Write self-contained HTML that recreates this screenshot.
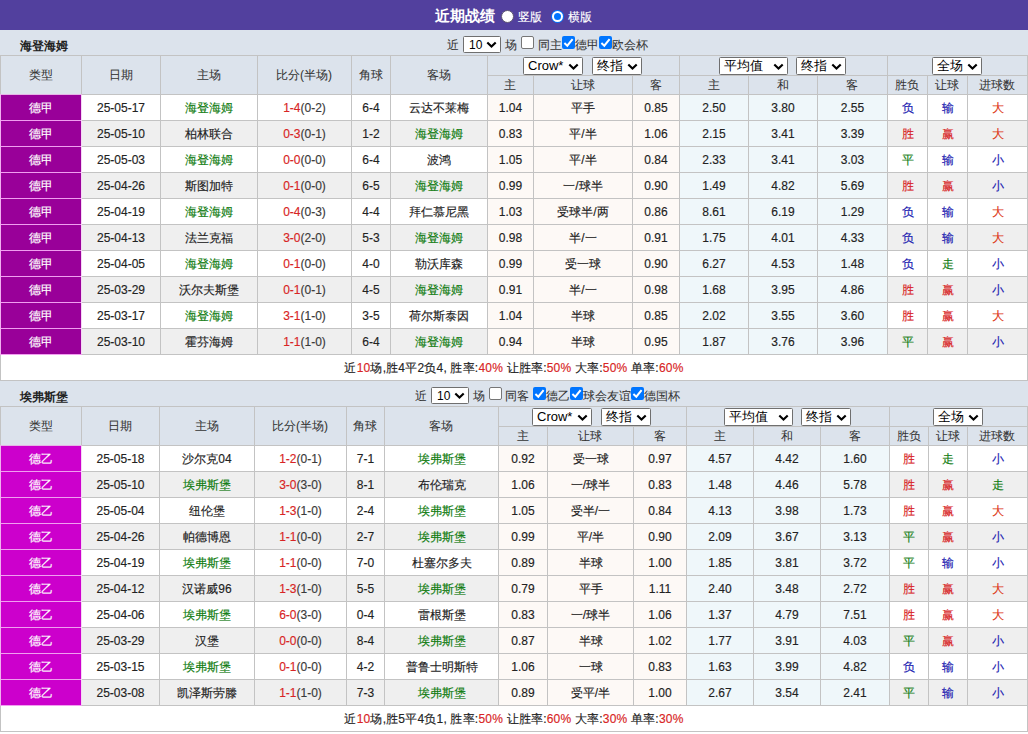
<!DOCTYPE html>
<html><head><meta charset="utf-8"><style>
html,body{margin:0;padding:0;background:#fff;}
body{width:1028px;height:734px;position:relative;overflow:hidden;font-family:"Liberation Sans", sans-serif;font-size:12px;color:#222;}
body>div{position:absolute;}
.t{text-align:center;white-space:nowrap;overflow:visible;-webkit-text-stroke:0.15px currentColor;}
.sel{position:absolute;background:#fff;border:1px solid #6f6f6f;border-radius:1.5px;color:#000;white-space:nowrap;}
.cb{position:absolute;width:11px;height:11px;border:1px solid #767676;border-radius:2px;background:#fff;}
.cb.on{width:13px;height:13px;border:none;background:#0075ff;border-radius:2px;}
.radio{position:absolute;width:11px;height:11px;border-radius:50%;background:#fff;border:1px solid #5c5470;}
.radio.on{width:13px;height:13px;border:none;background:#0075ff;}
.radio.on div{position:absolute;left:1px;top:1px;width:11px;height:11px;border-radius:50%;background:#fff;}
.radio.on div::after{content:"";position:absolute;left:2px;top:2px;width:7px;height:7px;border-radius:50%;background:#0075ff;}
</style></head><body>
<div style="left:0px;top:0px;width:1028px;height:30px;background:#52409e;"></div>
<div class="t" style="left:435px;top:1px;width:64px;height:30px;line-height:30px;color:#fff;font-weight:bold;font-size:15px;text-align:left;-webkit-text-stroke:0;">近期战绩</div>
<div class="radio" style="left:501px;top:10px"></div>
<div class="t" style="left:518px;top:2px;width:30px;height:30px;line-height:30px;color:#fff;text-align:left;font-size:12px;">竖版</div>
<div class="radio on" style="left:551px;top:10px"><div></div></div>
<div class="t" style="left:568px;top:2px;width:30px;height:30px;line-height:30px;color:#fff;text-align:left;font-size:12px;">横版</div>
<div style="left:0px;top:30px;width:1028px;height:25px;background:#dce3ec;"></div>
<div class="t" style="left:20px;top:34px;width:100px;height:25px;line-height:25px;font-weight:bold;text-align:left;color:#222;-webkit-text-stroke:0;">海登海姆</div>
<div class="t" style="left:447px;top:33px;width:100px;height:25px;line-height:25px;text-align:left;color:#333;-webkit-text-stroke:0.05px #333;">近</div>
<div class="sel" style="left:463px;top:36px;width:36px;height:15px;"><span style="position:absolute;left:5px;top:1px;line-height:15px;font-size:12px;font-family:"Liberation Mono",monospace;letter-spacing:-0.5px;">10</span><svg style="position:absolute;right:3px;top:4px" width="11" height="8" viewBox="0 0 11 8"><path d="M1.3 1.4 L5.5 5.6 L9.7 1.4" fill="none" stroke="#000" stroke-width="2.1"/></svg></div>
<div class="t" style="left:505px;top:33px;width:100px;height:25px;line-height:25px;text-align:left;color:#333;-webkit-text-stroke:0.05px #333;">场</div>
<div class="cb" style="left:521px;top:36px"></div>
<div class="t" style="left:538px;top:33px;width:100px;height:25px;line-height:25px;text-align:left;color:#333;-webkit-text-stroke:0.05px #333;">同主</div>
<div class="cb on" style="left:562px;top:36px"><svg width="13" height="13" viewBox="0 0 13 13" style="position:absolute;left:0;top:0"><path d="M2.4 7.1 L5.3 9.7 L10.6 3.2" fill="none" stroke="#fff" stroke-width="2"/></svg></div>
<div class="t" style="left:575px;top:33px;width:100px;height:25px;line-height:25px;text-align:left;color:#333;-webkit-text-stroke:0.05px #333;">德甲</div>
<div class="cb on" style="left:599px;top:36px"><svg width="13" height="13" viewBox="0 0 13 13" style="position:absolute;left:0;top:0"><path d="M2.4 7.1 L5.3 9.7 L10.6 3.2" fill="none" stroke="#fff" stroke-width="2"/></svg></div>
<div class="t" style="left:612px;top:33px;width:100px;height:25px;line-height:25px;text-align:left;color:#333;-webkit-text-stroke:0.05px #333;">欧会杯</div>
<div style="left:0px;top:55px;width:1028px;height:39px;background:#dce3ec;"></div>
<div class="t" style="left:0px;top:56px;width:81px;height:38px;line-height:38px;color:#333;-webkit-text-stroke:0.05px #333;">类型</div>
<div class="t" style="left:81px;top:56px;width:79px;height:38px;line-height:38px;color:#333;-webkit-text-stroke:0.05px #333;">日期</div>
<div class="t" style="left:160px;top:56px;width:97px;height:38px;line-height:38px;color:#333;-webkit-text-stroke:0.05px #333;">主场</div>
<div class="t" style="left:257px;top:56px;width:94px;height:38px;line-height:38px;color:#333;-webkit-text-stroke:0.05px #333;">比分(半场)</div>
<div class="t" style="left:351px;top:56px;width:39px;height:38px;line-height:38px;color:#333;-webkit-text-stroke:0.05px #333;">角球</div>
<div class="t" style="left:390px;top:56px;width:97px;height:38px;line-height:38px;color:#333;-webkit-text-stroke:0.05px #333;">客场</div>
<div class="t" style="left:487px;top:76px;width:46px;height:18px;line-height:18px;color:#333;-webkit-text-stroke:0.05px #333;">主</div>
<div class="t" style="left:533px;top:76px;width:99px;height:18px;line-height:18px;color:#333;-webkit-text-stroke:0.05px #333;">让球</div>
<div class="t" style="left:632px;top:76px;width:47px;height:18px;line-height:18px;color:#333;-webkit-text-stroke:0.05px #333;">客</div>
<div class="t" style="left:679px;top:76px;width:69px;height:18px;line-height:18px;color:#333;-webkit-text-stroke:0.05px #333;">主</div>
<div class="t" style="left:748px;top:76px;width:69px;height:18px;line-height:18px;color:#333;-webkit-text-stroke:0.05px #333;">和</div>
<div class="t" style="left:817px;top:76px;width:70px;height:18px;line-height:18px;color:#333;-webkit-text-stroke:0.05px #333;">客</div>
<div class="t" style="left:887px;top:76px;width:40px;height:18px;line-height:18px;color:#333;-webkit-text-stroke:0.05px #333;">胜负</div>
<div class="t" style="left:927px;top:76px;width:40px;height:18px;line-height:18px;color:#333;-webkit-text-stroke:0.05px #333;">让球</div>
<div class="t" style="left:967px;top:76px;width:60px;height:18px;line-height:18px;color:#333;-webkit-text-stroke:0.05px #333;">进球数</div>
<div class="sel" style="left:523px;top:57px;width:58px;height:16px;"><span style="position:absolute;left:4px;top:0px;line-height:16px;font-size:13px;">Crow*</span><svg style="position:absolute;right:3px;top:5px" width="11" height="8" viewBox="0 0 11 8"><path d="M1.3 1.4 L5.5 5.6 L9.7 1.4" fill="none" stroke="#000" stroke-width="2.1"/></svg></div>
<div class="sel" style="left:592px;top:57px;width:48px;height:16px;"><span style="position:absolute;left:4px;top:0px;line-height:16px;font-size:13px;">终指</span><svg style="position:absolute;right:3px;top:5px" width="11" height="8" viewBox="0 0 11 8"><path d="M1.3 1.4 L5.5 5.6 L9.7 1.4" fill="none" stroke="#000" stroke-width="2.1"/></svg></div>
<div class="sel" style="left:719px;top:57px;width:67px;height:16px;"><span style="position:absolute;left:4px;top:0px;line-height:16px;font-size:13px;">平均值</span><svg style="position:absolute;right:3px;top:5px" width="11" height="8" viewBox="0 0 11 8"><path d="M1.3 1.4 L5.5 5.6 L9.7 1.4" fill="none" stroke="#000" stroke-width="2.1"/></svg></div>
<div class="sel" style="left:796px;top:57px;width:48px;height:16px;"><span style="position:absolute;left:4px;top:0px;line-height:16px;font-size:13px;">终指</span><svg style="position:absolute;right:3px;top:5px" width="11" height="8" viewBox="0 0 11 8"><path d="M1.3 1.4 L5.5 5.6 L9.7 1.4" fill="none" stroke="#000" stroke-width="2.1"/></svg></div>
<div class="sel" style="left:932px;top:57px;width:48px;height:16px;"><span style="position:absolute;left:4px;top:0px;line-height:16px;font-size:13px;">全场</span><svg style="position:absolute;right:3px;top:5px" width="11" height="8" viewBox="0 0 11 8"><path d="M1.3 1.4 L5.5 5.6 L9.7 1.4" fill="none" stroke="#000" stroke-width="2.1"/></svg></div>
<div style="left:1px;top:95px;width:1026px;height:25px;background:#ffffff;"></div>
<div style="left:1px;top:95px;width:80px;height:25px;background:#990099;"></div>
<div style="left:488px;top:95px;width:191px;height:25px;background:#fdf9f6;"></div>
<div style="left:680px;top:95px;width:207px;height:25px;background:#eff7fa;"></div>
<div class="t" style="left:1px;top:96px;width:80px;height:25px;line-height:25px;color:#fff;">德甲</div>
<div class="t" style="left:82px;top:96px;width:78px;height:25px;line-height:25px;color:#222;">25-05-17</div>
<div class="t" style="left:161px;top:96px;width:96px;height:25px;line-height:25px;color:#107c10;">海登海姆</div>
<div class="t" style="left:258px;top:96px;width:93px;height:25px;line-height:25px;color:#222;"><span style="color:#d82424">1-4</span><span style="color:#3a3a3a">(0-2)</span></div>
<div class="t" style="left:352px;top:96px;width:38px;height:25px;line-height:25px;color:#222;">6-4</div>
<div class="t" style="left:391px;top:96px;width:96px;height:25px;line-height:25px;color:#222;">云达不莱梅</div>
<div class="t" style="left:488px;top:96px;width:45px;height:25px;line-height:25px;color:#222;">1.04</div>
<div class="t" style="left:534px;top:96px;width:98px;height:25px;line-height:25px;color:#222;">平手</div>
<div class="t" style="left:633px;top:96px;width:46px;height:25px;line-height:25px;color:#222;">0.85</div>
<div class="t" style="left:680px;top:96px;width:68px;height:25px;line-height:25px;color:#222;">2.50</div>
<div class="t" style="left:749px;top:96px;width:68px;height:25px;line-height:25px;color:#222;">3.80</div>
<div class="t" style="left:818px;top:96px;width:69px;height:25px;line-height:25px;color:#222;">2.55</div>
<div class="t" style="left:888px;top:96px;width:39px;height:25px;line-height:25px;color:#1818b0;">负</div>
<div class="t" style="left:928px;top:96px;width:39px;height:25px;line-height:25px;color:#1818b0;">输</div>
<div class="t" style="left:968px;top:96px;width:59px;height:25px;line-height:25px;color:#dd3311;">大</div>
<div style="left:1px;top:121px;width:1026px;height:25px;background:#efefef;"></div>
<div style="left:1px;top:121px;width:80px;height:25px;background:#990099;"></div>
<div style="left:488px;top:121px;width:191px;height:25px;background:#fdf9f6;"></div>
<div style="left:680px;top:121px;width:207px;height:25px;background:#eff7fa;"></div>
<div class="t" style="left:1px;top:122px;width:80px;height:25px;line-height:25px;color:#fff;">德甲</div>
<div class="t" style="left:82px;top:122px;width:78px;height:25px;line-height:25px;color:#222;">25-05-10</div>
<div class="t" style="left:161px;top:122px;width:96px;height:25px;line-height:25px;color:#222;">柏林联合</div>
<div class="t" style="left:258px;top:122px;width:93px;height:25px;line-height:25px;color:#222;"><span style="color:#d82424">0-3</span><span style="color:#3a3a3a">(0-1)</span></div>
<div class="t" style="left:352px;top:122px;width:38px;height:25px;line-height:25px;color:#222;">1-2</div>
<div class="t" style="left:391px;top:122px;width:96px;height:25px;line-height:25px;color:#107c10;">海登海姆</div>
<div class="t" style="left:488px;top:122px;width:45px;height:25px;line-height:25px;color:#222;">0.83</div>
<div class="t" style="left:534px;top:122px;width:98px;height:25px;line-height:25px;color:#222;">平/半</div>
<div class="t" style="left:633px;top:122px;width:46px;height:25px;line-height:25px;color:#222;">1.06</div>
<div class="t" style="left:680px;top:122px;width:68px;height:25px;line-height:25px;color:#222;">2.15</div>
<div class="t" style="left:749px;top:122px;width:68px;height:25px;line-height:25px;color:#222;">3.41</div>
<div class="t" style="left:818px;top:122px;width:69px;height:25px;line-height:25px;color:#222;">3.39</div>
<div class="t" style="left:888px;top:122px;width:39px;height:25px;line-height:25px;color:#d82424;">胜</div>
<div class="t" style="left:928px;top:122px;width:39px;height:25px;line-height:25px;color:#d82424;">赢</div>
<div class="t" style="left:968px;top:122px;width:59px;height:25px;line-height:25px;color:#dd3311;">大</div>
<div style="left:1px;top:147px;width:1026px;height:25px;background:#ffffff;"></div>
<div style="left:1px;top:147px;width:80px;height:25px;background:#990099;"></div>
<div style="left:488px;top:147px;width:191px;height:25px;background:#fdf9f6;"></div>
<div style="left:680px;top:147px;width:207px;height:25px;background:#eff7fa;"></div>
<div class="t" style="left:1px;top:148px;width:80px;height:25px;line-height:25px;color:#fff;">德甲</div>
<div class="t" style="left:82px;top:148px;width:78px;height:25px;line-height:25px;color:#222;">25-05-03</div>
<div class="t" style="left:161px;top:148px;width:96px;height:25px;line-height:25px;color:#107c10;">海登海姆</div>
<div class="t" style="left:258px;top:148px;width:93px;height:25px;line-height:25px;color:#222;"><span style="color:#d82424">0-0</span><span style="color:#3a3a3a">(0-0)</span></div>
<div class="t" style="left:352px;top:148px;width:38px;height:25px;line-height:25px;color:#222;">6-4</div>
<div class="t" style="left:391px;top:148px;width:96px;height:25px;line-height:25px;color:#222;">波鸿</div>
<div class="t" style="left:488px;top:148px;width:45px;height:25px;line-height:25px;color:#222;">1.05</div>
<div class="t" style="left:534px;top:148px;width:98px;height:25px;line-height:25px;color:#222;">平/半</div>
<div class="t" style="left:633px;top:148px;width:46px;height:25px;line-height:25px;color:#222;">0.84</div>
<div class="t" style="left:680px;top:148px;width:68px;height:25px;line-height:25px;color:#222;">2.33</div>
<div class="t" style="left:749px;top:148px;width:68px;height:25px;line-height:25px;color:#222;">3.41</div>
<div class="t" style="left:818px;top:148px;width:69px;height:25px;line-height:25px;color:#222;">3.03</div>
<div class="t" style="left:888px;top:148px;width:39px;height:25px;line-height:25px;color:#107c10;">平</div>
<div class="t" style="left:928px;top:148px;width:39px;height:25px;line-height:25px;color:#1818b0;">输</div>
<div class="t" style="left:968px;top:148px;width:59px;height:25px;line-height:25px;color:#1818b0;">小</div>
<div style="left:1px;top:173px;width:1026px;height:25px;background:#efefef;"></div>
<div style="left:1px;top:173px;width:80px;height:25px;background:#990099;"></div>
<div style="left:488px;top:173px;width:191px;height:25px;background:#fdf9f6;"></div>
<div style="left:680px;top:173px;width:207px;height:25px;background:#eff7fa;"></div>
<div class="t" style="left:1px;top:174px;width:80px;height:25px;line-height:25px;color:#fff;">德甲</div>
<div class="t" style="left:82px;top:174px;width:78px;height:25px;line-height:25px;color:#222;">25-04-26</div>
<div class="t" style="left:161px;top:174px;width:96px;height:25px;line-height:25px;color:#222;">斯图加特</div>
<div class="t" style="left:258px;top:174px;width:93px;height:25px;line-height:25px;color:#222;"><span style="color:#d82424">0-1</span><span style="color:#3a3a3a">(0-0)</span></div>
<div class="t" style="left:352px;top:174px;width:38px;height:25px;line-height:25px;color:#222;">6-5</div>
<div class="t" style="left:391px;top:174px;width:96px;height:25px;line-height:25px;color:#107c10;">海登海姆</div>
<div class="t" style="left:488px;top:174px;width:45px;height:25px;line-height:25px;color:#222;">0.99</div>
<div class="t" style="left:534px;top:174px;width:98px;height:25px;line-height:25px;color:#222;">一/球半</div>
<div class="t" style="left:633px;top:174px;width:46px;height:25px;line-height:25px;color:#222;">0.90</div>
<div class="t" style="left:680px;top:174px;width:68px;height:25px;line-height:25px;color:#222;">1.49</div>
<div class="t" style="left:749px;top:174px;width:68px;height:25px;line-height:25px;color:#222;">4.82</div>
<div class="t" style="left:818px;top:174px;width:69px;height:25px;line-height:25px;color:#222;">5.69</div>
<div class="t" style="left:888px;top:174px;width:39px;height:25px;line-height:25px;color:#d82424;">胜</div>
<div class="t" style="left:928px;top:174px;width:39px;height:25px;line-height:25px;color:#d82424;">赢</div>
<div class="t" style="left:968px;top:174px;width:59px;height:25px;line-height:25px;color:#1818b0;">小</div>
<div style="left:1px;top:199px;width:1026px;height:25px;background:#ffffff;"></div>
<div style="left:1px;top:199px;width:80px;height:25px;background:#990099;"></div>
<div style="left:488px;top:199px;width:191px;height:25px;background:#fdf9f6;"></div>
<div style="left:680px;top:199px;width:207px;height:25px;background:#eff7fa;"></div>
<div class="t" style="left:1px;top:200px;width:80px;height:25px;line-height:25px;color:#fff;">德甲</div>
<div class="t" style="left:82px;top:200px;width:78px;height:25px;line-height:25px;color:#222;">25-04-19</div>
<div class="t" style="left:161px;top:200px;width:96px;height:25px;line-height:25px;color:#107c10;">海登海姆</div>
<div class="t" style="left:258px;top:200px;width:93px;height:25px;line-height:25px;color:#222;"><span style="color:#d82424">0-4</span><span style="color:#3a3a3a">(0-3)</span></div>
<div class="t" style="left:352px;top:200px;width:38px;height:25px;line-height:25px;color:#222;">4-4</div>
<div class="t" style="left:391px;top:200px;width:96px;height:25px;line-height:25px;color:#222;">拜仁慕尼黑</div>
<div class="t" style="left:488px;top:200px;width:45px;height:25px;line-height:25px;color:#222;">1.03</div>
<div class="t" style="left:534px;top:200px;width:98px;height:25px;line-height:25px;color:#222;">受球半/两</div>
<div class="t" style="left:633px;top:200px;width:46px;height:25px;line-height:25px;color:#222;">0.86</div>
<div class="t" style="left:680px;top:200px;width:68px;height:25px;line-height:25px;color:#222;">8.61</div>
<div class="t" style="left:749px;top:200px;width:68px;height:25px;line-height:25px;color:#222;">6.19</div>
<div class="t" style="left:818px;top:200px;width:69px;height:25px;line-height:25px;color:#222;">1.29</div>
<div class="t" style="left:888px;top:200px;width:39px;height:25px;line-height:25px;color:#1818b0;">负</div>
<div class="t" style="left:928px;top:200px;width:39px;height:25px;line-height:25px;color:#1818b0;">输</div>
<div class="t" style="left:968px;top:200px;width:59px;height:25px;line-height:25px;color:#dd3311;">大</div>
<div style="left:1px;top:225px;width:1026px;height:25px;background:#efefef;"></div>
<div style="left:1px;top:225px;width:80px;height:25px;background:#990099;"></div>
<div style="left:488px;top:225px;width:191px;height:25px;background:#fdf9f6;"></div>
<div style="left:680px;top:225px;width:207px;height:25px;background:#eff7fa;"></div>
<div class="t" style="left:1px;top:226px;width:80px;height:25px;line-height:25px;color:#fff;">德甲</div>
<div class="t" style="left:82px;top:226px;width:78px;height:25px;line-height:25px;color:#222;">25-04-13</div>
<div class="t" style="left:161px;top:226px;width:96px;height:25px;line-height:25px;color:#222;">法兰克福</div>
<div class="t" style="left:258px;top:226px;width:93px;height:25px;line-height:25px;color:#222;"><span style="color:#d82424">3-0</span><span style="color:#3a3a3a">(2-0)</span></div>
<div class="t" style="left:352px;top:226px;width:38px;height:25px;line-height:25px;color:#222;">5-3</div>
<div class="t" style="left:391px;top:226px;width:96px;height:25px;line-height:25px;color:#107c10;">海登海姆</div>
<div class="t" style="left:488px;top:226px;width:45px;height:25px;line-height:25px;color:#222;">0.98</div>
<div class="t" style="left:534px;top:226px;width:98px;height:25px;line-height:25px;color:#222;">半/一</div>
<div class="t" style="left:633px;top:226px;width:46px;height:25px;line-height:25px;color:#222;">0.91</div>
<div class="t" style="left:680px;top:226px;width:68px;height:25px;line-height:25px;color:#222;">1.75</div>
<div class="t" style="left:749px;top:226px;width:68px;height:25px;line-height:25px;color:#222;">4.01</div>
<div class="t" style="left:818px;top:226px;width:69px;height:25px;line-height:25px;color:#222;">4.33</div>
<div class="t" style="left:888px;top:226px;width:39px;height:25px;line-height:25px;color:#1818b0;">负</div>
<div class="t" style="left:928px;top:226px;width:39px;height:25px;line-height:25px;color:#1818b0;">输</div>
<div class="t" style="left:968px;top:226px;width:59px;height:25px;line-height:25px;color:#dd3311;">大</div>
<div style="left:1px;top:251px;width:1026px;height:25px;background:#ffffff;"></div>
<div style="left:1px;top:251px;width:80px;height:25px;background:#990099;"></div>
<div style="left:488px;top:251px;width:191px;height:25px;background:#fdf9f6;"></div>
<div style="left:680px;top:251px;width:207px;height:25px;background:#eff7fa;"></div>
<div class="t" style="left:1px;top:252px;width:80px;height:25px;line-height:25px;color:#fff;">德甲</div>
<div class="t" style="left:82px;top:252px;width:78px;height:25px;line-height:25px;color:#222;">25-04-05</div>
<div class="t" style="left:161px;top:252px;width:96px;height:25px;line-height:25px;color:#107c10;">海登海姆</div>
<div class="t" style="left:258px;top:252px;width:93px;height:25px;line-height:25px;color:#222;"><span style="color:#d82424">0-1</span><span style="color:#3a3a3a">(0-0)</span></div>
<div class="t" style="left:352px;top:252px;width:38px;height:25px;line-height:25px;color:#222;">4-0</div>
<div class="t" style="left:391px;top:252px;width:96px;height:25px;line-height:25px;color:#222;">勒沃库森</div>
<div class="t" style="left:488px;top:252px;width:45px;height:25px;line-height:25px;color:#222;">0.99</div>
<div class="t" style="left:534px;top:252px;width:98px;height:25px;line-height:25px;color:#222;">受一球</div>
<div class="t" style="left:633px;top:252px;width:46px;height:25px;line-height:25px;color:#222;">0.90</div>
<div class="t" style="left:680px;top:252px;width:68px;height:25px;line-height:25px;color:#222;">6.27</div>
<div class="t" style="left:749px;top:252px;width:68px;height:25px;line-height:25px;color:#222;">4.53</div>
<div class="t" style="left:818px;top:252px;width:69px;height:25px;line-height:25px;color:#222;">1.48</div>
<div class="t" style="left:888px;top:252px;width:39px;height:25px;line-height:25px;color:#1818b0;">负</div>
<div class="t" style="left:928px;top:252px;width:39px;height:25px;line-height:25px;color:#107c10;">走</div>
<div class="t" style="left:968px;top:252px;width:59px;height:25px;line-height:25px;color:#1818b0;">小</div>
<div style="left:1px;top:277px;width:1026px;height:25px;background:#efefef;"></div>
<div style="left:1px;top:277px;width:80px;height:25px;background:#990099;"></div>
<div style="left:488px;top:277px;width:191px;height:25px;background:#fdf9f6;"></div>
<div style="left:680px;top:277px;width:207px;height:25px;background:#eff7fa;"></div>
<div class="t" style="left:1px;top:278px;width:80px;height:25px;line-height:25px;color:#fff;">德甲</div>
<div class="t" style="left:82px;top:278px;width:78px;height:25px;line-height:25px;color:#222;">25-03-29</div>
<div class="t" style="left:161px;top:278px;width:96px;height:25px;line-height:25px;color:#222;">沃尔夫斯堡</div>
<div class="t" style="left:258px;top:278px;width:93px;height:25px;line-height:25px;color:#222;"><span style="color:#d82424">0-1</span><span style="color:#3a3a3a">(0-1)</span></div>
<div class="t" style="left:352px;top:278px;width:38px;height:25px;line-height:25px;color:#222;">4-5</div>
<div class="t" style="left:391px;top:278px;width:96px;height:25px;line-height:25px;color:#107c10;">海登海姆</div>
<div class="t" style="left:488px;top:278px;width:45px;height:25px;line-height:25px;color:#222;">0.91</div>
<div class="t" style="left:534px;top:278px;width:98px;height:25px;line-height:25px;color:#222;">半/一</div>
<div class="t" style="left:633px;top:278px;width:46px;height:25px;line-height:25px;color:#222;">0.98</div>
<div class="t" style="left:680px;top:278px;width:68px;height:25px;line-height:25px;color:#222;">1.68</div>
<div class="t" style="left:749px;top:278px;width:68px;height:25px;line-height:25px;color:#222;">3.95</div>
<div class="t" style="left:818px;top:278px;width:69px;height:25px;line-height:25px;color:#222;">4.86</div>
<div class="t" style="left:888px;top:278px;width:39px;height:25px;line-height:25px;color:#d82424;">胜</div>
<div class="t" style="left:928px;top:278px;width:39px;height:25px;line-height:25px;color:#d82424;">赢</div>
<div class="t" style="left:968px;top:278px;width:59px;height:25px;line-height:25px;color:#1818b0;">小</div>
<div style="left:1px;top:303px;width:1026px;height:25px;background:#ffffff;"></div>
<div style="left:1px;top:303px;width:80px;height:25px;background:#990099;"></div>
<div style="left:488px;top:303px;width:191px;height:25px;background:#fdf9f6;"></div>
<div style="left:680px;top:303px;width:207px;height:25px;background:#eff7fa;"></div>
<div class="t" style="left:1px;top:304px;width:80px;height:25px;line-height:25px;color:#fff;">德甲</div>
<div class="t" style="left:82px;top:304px;width:78px;height:25px;line-height:25px;color:#222;">25-03-17</div>
<div class="t" style="left:161px;top:304px;width:96px;height:25px;line-height:25px;color:#107c10;">海登海姆</div>
<div class="t" style="left:258px;top:304px;width:93px;height:25px;line-height:25px;color:#222;"><span style="color:#d82424">3-1</span><span style="color:#3a3a3a">(1-0)</span></div>
<div class="t" style="left:352px;top:304px;width:38px;height:25px;line-height:25px;color:#222;">3-5</div>
<div class="t" style="left:391px;top:304px;width:96px;height:25px;line-height:25px;color:#222;">荷尔斯泰因</div>
<div class="t" style="left:488px;top:304px;width:45px;height:25px;line-height:25px;color:#222;">1.04</div>
<div class="t" style="left:534px;top:304px;width:98px;height:25px;line-height:25px;color:#222;">半球</div>
<div class="t" style="left:633px;top:304px;width:46px;height:25px;line-height:25px;color:#222;">0.85</div>
<div class="t" style="left:680px;top:304px;width:68px;height:25px;line-height:25px;color:#222;">2.02</div>
<div class="t" style="left:749px;top:304px;width:68px;height:25px;line-height:25px;color:#222;">3.55</div>
<div class="t" style="left:818px;top:304px;width:69px;height:25px;line-height:25px;color:#222;">3.60</div>
<div class="t" style="left:888px;top:304px;width:39px;height:25px;line-height:25px;color:#d82424;">胜</div>
<div class="t" style="left:928px;top:304px;width:39px;height:25px;line-height:25px;color:#d82424;">赢</div>
<div class="t" style="left:968px;top:304px;width:59px;height:25px;line-height:25px;color:#dd3311;">大</div>
<div style="left:1px;top:329px;width:1026px;height:25px;background:#efefef;"></div>
<div style="left:1px;top:329px;width:80px;height:25px;background:#990099;"></div>
<div style="left:488px;top:329px;width:191px;height:25px;background:#fdf9f6;"></div>
<div style="left:680px;top:329px;width:207px;height:25px;background:#eff7fa;"></div>
<div class="t" style="left:1px;top:330px;width:80px;height:25px;line-height:25px;color:#fff;">德甲</div>
<div class="t" style="left:82px;top:330px;width:78px;height:25px;line-height:25px;color:#222;">25-03-10</div>
<div class="t" style="left:161px;top:330px;width:96px;height:25px;line-height:25px;color:#222;">霍芬海姆</div>
<div class="t" style="left:258px;top:330px;width:93px;height:25px;line-height:25px;color:#222;"><span style="color:#d82424">1-1</span><span style="color:#3a3a3a">(1-0)</span></div>
<div class="t" style="left:352px;top:330px;width:38px;height:25px;line-height:25px;color:#222;">6-4</div>
<div class="t" style="left:391px;top:330px;width:96px;height:25px;line-height:25px;color:#107c10;">海登海姆</div>
<div class="t" style="left:488px;top:330px;width:45px;height:25px;line-height:25px;color:#222;">0.94</div>
<div class="t" style="left:534px;top:330px;width:98px;height:25px;line-height:25px;color:#222;">半球</div>
<div class="t" style="left:633px;top:330px;width:46px;height:25px;line-height:25px;color:#222;">0.95</div>
<div class="t" style="left:680px;top:330px;width:68px;height:25px;line-height:25px;color:#222;">1.87</div>
<div class="t" style="left:749px;top:330px;width:68px;height:25px;line-height:25px;color:#222;">3.76</div>
<div class="t" style="left:818px;top:330px;width:69px;height:25px;line-height:25px;color:#222;">3.96</div>
<div class="t" style="left:888px;top:330px;width:39px;height:25px;line-height:25px;color:#107c10;">平</div>
<div class="t" style="left:928px;top:330px;width:39px;height:25px;line-height:25px;color:#d82424;">赢</div>
<div class="t" style="left:968px;top:330px;width:59px;height:25px;line-height:25px;color:#1818b0;">小</div>
<div style="left:1px;top:355px;width:1026px;height:25px;background:#fff;"></div>
<div class="t" style="left:1px;top:356px;width:1026px;height:25px;line-height:25px;color:#222;letter-spacing:0.2px;">近<span style="color:#d82424">10</span>场,胜4平2负4, 胜率:<span style="color:#d82424">40%</span> 让胜率:<span style="color:#d82424">50%</span> 大率:<span style="color:#d82424">50%</span> 单率:<span style="color:#d82424">60%</span></div>
<div style="left:0px;top:55px;width:1028px;height:1px;background:#c3c3c3"></div>
<div style="left:487px;top:75px;width:541px;height:1px;background:#c3c3c3"></div>
<div style="left:0px;top:94px;width:1028px;height:1px;background:#c3c3c3"></div>
<div style="left:82px;top:120px;width:946px;height:1px;background:#c3c3c3"></div>
<div style="left:82px;top:146px;width:946px;height:1px;background:#c3c3c3"></div>
<div style="left:82px;top:172px;width:946px;height:1px;background:#c3c3c3"></div>
<div style="left:82px;top:198px;width:946px;height:1px;background:#c3c3c3"></div>
<div style="left:82px;top:224px;width:946px;height:1px;background:#c3c3c3"></div>
<div style="left:82px;top:250px;width:946px;height:1px;background:#c3c3c3"></div>
<div style="left:82px;top:276px;width:946px;height:1px;background:#c3c3c3"></div>
<div style="left:82px;top:302px;width:946px;height:1px;background:#c3c3c3"></div>
<div style="left:82px;top:328px;width:946px;height:1px;background:#c3c3c3"></div>
<div style="left:82px;top:354px;width:946px;height:1px;background:#c3c3c3"></div>
<div style="left:0px;top:380px;width:1028px;height:1px;background:#c3c3c3"></div>
<div style="left:0px;top:55px;width:1px;height:39px;background:#c3c3c3"></div>
<div style="left:81px;top:55px;width:1px;height:39px;background:#c3c3c3"></div>
<div style="left:160px;top:55px;width:1px;height:39px;background:#c3c3c3"></div>
<div style="left:257px;top:55px;width:1px;height:39px;background:#c3c3c3"></div>
<div style="left:351px;top:55px;width:1px;height:39px;background:#c3c3c3"></div>
<div style="left:390px;top:55px;width:1px;height:39px;background:#c3c3c3"></div>
<div style="left:487px;top:55px;width:1px;height:39px;background:#c3c3c3"></div>
<div style="left:679px;top:55px;width:1px;height:39px;background:#c3c3c3"></div>
<div style="left:887px;top:55px;width:1px;height:39px;background:#c3c3c3"></div>
<div style="left:1027px;top:55px;width:1px;height:39px;background:#c3c3c3"></div>
<div style="left:533px;top:75px;width:1px;height:19px;background:#c3c3c3"></div>
<div style="left:632px;top:75px;width:1px;height:19px;background:#c3c3c3"></div>
<div style="left:748px;top:75px;width:1px;height:19px;background:#c3c3c3"></div>
<div style="left:817px;top:75px;width:1px;height:19px;background:#c3c3c3"></div>
<div style="left:927px;top:75px;width:1px;height:19px;background:#c3c3c3"></div>
<div style="left:967px;top:75px;width:1px;height:19px;background:#c3c3c3"></div>
<div style="left:160px;top:94px;width:1px;height:261px;background:#c3c3c3"></div>
<div style="left:257px;top:94px;width:1px;height:261px;background:#c3c3c3"></div>
<div style="left:351px;top:94px;width:1px;height:261px;background:#c3c3c3"></div>
<div style="left:390px;top:94px;width:1px;height:261px;background:#c3c3c3"></div>
<div style="left:487px;top:94px;width:1px;height:261px;background:#c3c3c3"></div>
<div style="left:533px;top:94px;width:1px;height:261px;background:#c3c3c3"></div>
<div style="left:632px;top:94px;width:1px;height:261px;background:#c3c3c3"></div>
<div style="left:679px;top:94px;width:1px;height:261px;background:#c3c3c3"></div>
<div style="left:748px;top:94px;width:1px;height:261px;background:#c3c3c3"></div>
<div style="left:817px;top:94px;width:1px;height:261px;background:#c3c3c3"></div>
<div style="left:887px;top:94px;width:1px;height:261px;background:#c3c3c3"></div>
<div style="left:927px;top:94px;width:1px;height:261px;background:#c3c3c3"></div>
<div style="left:967px;top:94px;width:1px;height:261px;background:#c3c3c3"></div>
<div style="left:1027px;top:94px;width:1px;height:287px;background:#c3c3c3"></div>
<div style="left:0px;top:354px;width:1px;height:27px;background:#c3c3c3"></div>
<div style="left:0px;top:120px;width:82px;height:1px;background:#f09ef0"></div>
<div style="left:0px;top:146px;width:82px;height:1px;background:#f09ef0"></div>
<div style="left:0px;top:172px;width:82px;height:1px;background:#f09ef0"></div>
<div style="left:0px;top:198px;width:82px;height:1px;background:#f09ef0"></div>
<div style="left:0px;top:224px;width:82px;height:1px;background:#f09ef0"></div>
<div style="left:0px;top:250px;width:82px;height:1px;background:#f09ef0"></div>
<div style="left:0px;top:276px;width:82px;height:1px;background:#f09ef0"></div>
<div style="left:0px;top:302px;width:82px;height:1px;background:#f09ef0"></div>
<div style="left:0px;top:328px;width:82px;height:1px;background:#f09ef0"></div>
<div style="left:0px;top:354px;width:82px;height:1px;background:#f09ef0"></div>
<div style="left:0px;top:94px;width:82px;height:1px;background:#e6b4e6"></div>
<div style="left:0px;top:94px;width:1px;height:260px;background:#f0b0f0"></div>
<div style="left:81px;top:95px;width:1px;height:259px;background:#f6d6f6"></div>
<div style="left:0px;top:381px;width:1028px;height:25px;background:#dce3ec;"></div>
<div class="t" style="left:20px;top:385px;width:100px;height:25px;line-height:25px;font-weight:bold;text-align:left;color:#222;-webkit-text-stroke:0;">埃弗斯堡</div>
<div class="t" style="left:415px;top:384px;width:100px;height:25px;line-height:25px;text-align:left;color:#333;-webkit-text-stroke:0.05px #333;">近</div>
<div class="sel" style="left:431px;top:387px;width:36px;height:15px;"><span style="position:absolute;left:5px;top:1px;line-height:15px;font-size:12px;font-family:"Liberation Mono",monospace;letter-spacing:-0.5px;">10</span><svg style="position:absolute;right:3px;top:4px" width="11" height="8" viewBox="0 0 11 8"><path d="M1.3 1.4 L5.5 5.6 L9.7 1.4" fill="none" stroke="#000" stroke-width="2.1"/></svg></div>
<div class="t" style="left:473px;top:384px;width:100px;height:25px;line-height:25px;text-align:left;color:#333;-webkit-text-stroke:0.05px #333;">场</div>
<div class="cb" style="left:489px;top:387px"></div>
<div class="t" style="left:505px;top:384px;width:100px;height:25px;line-height:25px;text-align:left;color:#333;-webkit-text-stroke:0.05px #333;">同客</div>
<div class="cb on" style="left:533px;top:387px"><svg width="13" height="13" viewBox="0 0 13 13" style="position:absolute;left:0;top:0"><path d="M2.4 7.1 L5.3 9.7 L10.6 3.2" fill="none" stroke="#fff" stroke-width="2"/></svg></div>
<div class="t" style="left:546px;top:384px;width:100px;height:25px;line-height:25px;text-align:left;color:#333;-webkit-text-stroke:0.05px #333;">德乙</div>
<div class="cb on" style="left:570px;top:387px"><svg width="13" height="13" viewBox="0 0 13 13" style="position:absolute;left:0;top:0"><path d="M2.4 7.1 L5.3 9.7 L10.6 3.2" fill="none" stroke="#fff" stroke-width="2"/></svg></div>
<div class="t" style="left:583px;top:384px;width:100px;height:25px;line-height:25px;text-align:left;color:#333;-webkit-text-stroke:0.05px #333;">球会友谊</div>
<div class="cb on" style="left:631px;top:387px"><svg width="13" height="13" viewBox="0 0 13 13" style="position:absolute;left:0;top:0"><path d="M2.4 7.1 L5.3 9.7 L10.6 3.2" fill="none" stroke="#fff" stroke-width="2"/></svg></div>
<div class="t" style="left:644px;top:384px;width:100px;height:25px;line-height:25px;text-align:left;color:#333;-webkit-text-stroke:0.05px #333;">德国杯</div>
<div style="left:0px;top:406px;width:1028px;height:39px;background:#dce3ec;"></div>
<div class="t" style="left:0px;top:407px;width:81px;height:38px;line-height:38px;color:#333;-webkit-text-stroke:0.05px #333;">类型</div>
<div class="t" style="left:81px;top:407px;width:78px;height:38px;line-height:38px;color:#333;-webkit-text-stroke:0.05px #333;">日期</div>
<div class="t" style="left:159px;top:407px;width:95px;height:38px;line-height:38px;color:#333;-webkit-text-stroke:0.05px #333;">主场</div>
<div class="t" style="left:254px;top:407px;width:92px;height:38px;line-height:38px;color:#333;-webkit-text-stroke:0.05px #333;">比分(半场)</div>
<div class="t" style="left:346px;top:407px;width:38px;height:38px;line-height:38px;color:#333;-webkit-text-stroke:0.05px #333;">角球</div>
<div class="t" style="left:384px;top:407px;width:114px;height:38px;line-height:38px;color:#333;-webkit-text-stroke:0.05px #333;">客场</div>
<div class="t" style="left:498px;top:427px;width:49px;height:18px;line-height:18px;color:#333;-webkit-text-stroke:0.05px #333;">主</div>
<div class="t" style="left:547px;top:427px;width:86px;height:18px;line-height:18px;color:#333;-webkit-text-stroke:0.05px #333;">让球</div>
<div class="t" style="left:633px;top:427px;width:53px;height:18px;line-height:18px;color:#333;-webkit-text-stroke:0.05px #333;">客</div>
<div class="t" style="left:686px;top:427px;width:67px;height:18px;line-height:18px;color:#333;-webkit-text-stroke:0.05px #333;">主</div>
<div class="t" style="left:753px;top:427px;width:67px;height:18px;line-height:18px;color:#333;-webkit-text-stroke:0.05px #333;">和</div>
<div class="t" style="left:820px;top:427px;width:69px;height:18px;line-height:18px;color:#333;-webkit-text-stroke:0.05px #333;">客</div>
<div class="t" style="left:889px;top:427px;width:39px;height:18px;line-height:18px;color:#333;-webkit-text-stroke:0.05px #333;">胜负</div>
<div class="t" style="left:928px;top:427px;width:39px;height:18px;line-height:18px;color:#333;-webkit-text-stroke:0.05px #333;">让球</div>
<div class="t" style="left:967px;top:427px;width:60px;height:18px;line-height:18px;color:#333;-webkit-text-stroke:0.05px #333;">进球数</div>
<div class="sel" style="left:532px;top:408px;width:58px;height:16px;"><span style="position:absolute;left:4px;top:0px;line-height:16px;font-size:13px;">Crow*</span><svg style="position:absolute;right:3px;top:5px" width="11" height="8" viewBox="0 0 11 8"><path d="M1.3 1.4 L5.5 5.6 L9.7 1.4" fill="none" stroke="#000" stroke-width="2.1"/></svg></div>
<div class="sel" style="left:601px;top:408px;width:48px;height:16px;"><span style="position:absolute;left:4px;top:0px;line-height:16px;font-size:13px;">终指</span><svg style="position:absolute;right:3px;top:5px" width="11" height="8" viewBox="0 0 11 8"><path d="M1.3 1.4 L5.5 5.6 L9.7 1.4" fill="none" stroke="#000" stroke-width="2.1"/></svg></div>
<div class="sel" style="left:724px;top:408px;width:67px;height:16px;"><span style="position:absolute;left:4px;top:0px;line-height:16px;font-size:13px;">平均值</span><svg style="position:absolute;right:3px;top:5px" width="11" height="8" viewBox="0 0 11 8"><path d="M1.3 1.4 L5.5 5.6 L9.7 1.4" fill="none" stroke="#000" stroke-width="2.1"/></svg></div>
<div class="sel" style="left:801px;top:408px;width:48px;height:16px;"><span style="position:absolute;left:4px;top:0px;line-height:16px;font-size:13px;">终指</span><svg style="position:absolute;right:3px;top:5px" width="11" height="8" viewBox="0 0 11 8"><path d="M1.3 1.4 L5.5 5.6 L9.7 1.4" fill="none" stroke="#000" stroke-width="2.1"/></svg></div>
<div class="sel" style="left:933px;top:408px;width:48px;height:16px;"><span style="position:absolute;left:4px;top:0px;line-height:16px;font-size:13px;">全场</span><svg style="position:absolute;right:3px;top:5px" width="11" height="8" viewBox="0 0 11 8"><path d="M1.3 1.4 L5.5 5.6 L9.7 1.4" fill="none" stroke="#000" stroke-width="2.1"/></svg></div>
<div style="left:1px;top:446px;width:1026px;height:25px;background:#ffffff;"></div>
<div style="left:1px;top:446px;width:80px;height:25px;background:#cc00cc;"></div>
<div style="left:499px;top:446px;width:187px;height:25px;background:#fdf9f6;"></div>
<div style="left:687px;top:446px;width:202px;height:25px;background:#eff7fa;"></div>
<div class="t" style="left:1px;top:447px;width:80px;height:25px;line-height:25px;color:#fff;">德乙</div>
<div class="t" style="left:82px;top:447px;width:77px;height:25px;line-height:25px;color:#222;">25-05-18</div>
<div class="t" style="left:160px;top:447px;width:94px;height:25px;line-height:25px;color:#222;">沙尔克04</div>
<div class="t" style="left:255px;top:447px;width:91px;height:25px;line-height:25px;color:#222;"><span style="color:#d82424">1-2</span><span style="color:#3a3a3a">(0-1)</span></div>
<div class="t" style="left:347px;top:447px;width:37px;height:25px;line-height:25px;color:#222;">7-1</div>
<div class="t" style="left:385px;top:447px;width:113px;height:25px;line-height:25px;color:#107c10;">埃弗斯堡</div>
<div class="t" style="left:499px;top:447px;width:48px;height:25px;line-height:25px;color:#222;">0.92</div>
<div class="t" style="left:548px;top:447px;width:85px;height:25px;line-height:25px;color:#222;">受一球</div>
<div class="t" style="left:634px;top:447px;width:52px;height:25px;line-height:25px;color:#222;">0.97</div>
<div class="t" style="left:687px;top:447px;width:66px;height:25px;line-height:25px;color:#222;">4.57</div>
<div class="t" style="left:754px;top:447px;width:66px;height:25px;line-height:25px;color:#222;">4.42</div>
<div class="t" style="left:821px;top:447px;width:68px;height:25px;line-height:25px;color:#222;">1.60</div>
<div class="t" style="left:890px;top:447px;width:38px;height:25px;line-height:25px;color:#d82424;">胜</div>
<div class="t" style="left:929px;top:447px;width:38px;height:25px;line-height:25px;color:#107c10;">走</div>
<div class="t" style="left:968px;top:447px;width:59px;height:25px;line-height:25px;color:#1818b0;">小</div>
<div style="left:1px;top:472px;width:1026px;height:25px;background:#efefef;"></div>
<div style="left:1px;top:472px;width:80px;height:25px;background:#cc00cc;"></div>
<div style="left:499px;top:472px;width:187px;height:25px;background:#fdf9f6;"></div>
<div style="left:687px;top:472px;width:202px;height:25px;background:#eff7fa;"></div>
<div class="t" style="left:1px;top:473px;width:80px;height:25px;line-height:25px;color:#fff;">德乙</div>
<div class="t" style="left:82px;top:473px;width:77px;height:25px;line-height:25px;color:#222;">25-05-10</div>
<div class="t" style="left:160px;top:473px;width:94px;height:25px;line-height:25px;color:#107c10;">埃弗斯堡</div>
<div class="t" style="left:255px;top:473px;width:91px;height:25px;line-height:25px;color:#222;"><span style="color:#d82424">3-0</span><span style="color:#3a3a3a">(3-0)</span></div>
<div class="t" style="left:347px;top:473px;width:37px;height:25px;line-height:25px;color:#222;">8-1</div>
<div class="t" style="left:385px;top:473px;width:113px;height:25px;line-height:25px;color:#222;">布伦瑞克</div>
<div class="t" style="left:499px;top:473px;width:48px;height:25px;line-height:25px;color:#222;">1.06</div>
<div class="t" style="left:548px;top:473px;width:85px;height:25px;line-height:25px;color:#222;">一/球半</div>
<div class="t" style="left:634px;top:473px;width:52px;height:25px;line-height:25px;color:#222;">0.83</div>
<div class="t" style="left:687px;top:473px;width:66px;height:25px;line-height:25px;color:#222;">1.48</div>
<div class="t" style="left:754px;top:473px;width:66px;height:25px;line-height:25px;color:#222;">4.46</div>
<div class="t" style="left:821px;top:473px;width:68px;height:25px;line-height:25px;color:#222;">5.78</div>
<div class="t" style="left:890px;top:473px;width:38px;height:25px;line-height:25px;color:#d82424;">胜</div>
<div class="t" style="left:929px;top:473px;width:38px;height:25px;line-height:25px;color:#d82424;">赢</div>
<div class="t" style="left:968px;top:473px;width:59px;height:25px;line-height:25px;color:#107c10;">走</div>
<div style="left:1px;top:498px;width:1026px;height:25px;background:#ffffff;"></div>
<div style="left:1px;top:498px;width:80px;height:25px;background:#cc00cc;"></div>
<div style="left:499px;top:498px;width:187px;height:25px;background:#fdf9f6;"></div>
<div style="left:687px;top:498px;width:202px;height:25px;background:#eff7fa;"></div>
<div class="t" style="left:1px;top:499px;width:80px;height:25px;line-height:25px;color:#fff;">德乙</div>
<div class="t" style="left:82px;top:499px;width:77px;height:25px;line-height:25px;color:#222;">25-05-04</div>
<div class="t" style="left:160px;top:499px;width:94px;height:25px;line-height:25px;color:#222;">纽伦堡</div>
<div class="t" style="left:255px;top:499px;width:91px;height:25px;line-height:25px;color:#222;"><span style="color:#d82424">1-3</span><span style="color:#3a3a3a">(1-0)</span></div>
<div class="t" style="left:347px;top:499px;width:37px;height:25px;line-height:25px;color:#222;">2-4</div>
<div class="t" style="left:385px;top:499px;width:113px;height:25px;line-height:25px;color:#107c10;">埃弗斯堡</div>
<div class="t" style="left:499px;top:499px;width:48px;height:25px;line-height:25px;color:#222;">1.05</div>
<div class="t" style="left:548px;top:499px;width:85px;height:25px;line-height:25px;color:#222;">受半/一</div>
<div class="t" style="left:634px;top:499px;width:52px;height:25px;line-height:25px;color:#222;">0.84</div>
<div class="t" style="left:687px;top:499px;width:66px;height:25px;line-height:25px;color:#222;">4.13</div>
<div class="t" style="left:754px;top:499px;width:66px;height:25px;line-height:25px;color:#222;">3.98</div>
<div class="t" style="left:821px;top:499px;width:68px;height:25px;line-height:25px;color:#222;">1.73</div>
<div class="t" style="left:890px;top:499px;width:38px;height:25px;line-height:25px;color:#d82424;">胜</div>
<div class="t" style="left:929px;top:499px;width:38px;height:25px;line-height:25px;color:#d82424;">赢</div>
<div class="t" style="left:968px;top:499px;width:59px;height:25px;line-height:25px;color:#dd3311;">大</div>
<div style="left:1px;top:524px;width:1026px;height:25px;background:#efefef;"></div>
<div style="left:1px;top:524px;width:80px;height:25px;background:#cc00cc;"></div>
<div style="left:499px;top:524px;width:187px;height:25px;background:#fdf9f6;"></div>
<div style="left:687px;top:524px;width:202px;height:25px;background:#eff7fa;"></div>
<div class="t" style="left:1px;top:525px;width:80px;height:25px;line-height:25px;color:#fff;">德乙</div>
<div class="t" style="left:82px;top:525px;width:77px;height:25px;line-height:25px;color:#222;">25-04-26</div>
<div class="t" style="left:160px;top:525px;width:94px;height:25px;line-height:25px;color:#222;">帕德博恩</div>
<div class="t" style="left:255px;top:525px;width:91px;height:25px;line-height:25px;color:#222;"><span style="color:#d82424">1-1</span><span style="color:#3a3a3a">(0-0)</span></div>
<div class="t" style="left:347px;top:525px;width:37px;height:25px;line-height:25px;color:#222;">2-7</div>
<div class="t" style="left:385px;top:525px;width:113px;height:25px;line-height:25px;color:#107c10;">埃弗斯堡</div>
<div class="t" style="left:499px;top:525px;width:48px;height:25px;line-height:25px;color:#222;">0.99</div>
<div class="t" style="left:548px;top:525px;width:85px;height:25px;line-height:25px;color:#222;">平/半</div>
<div class="t" style="left:634px;top:525px;width:52px;height:25px;line-height:25px;color:#222;">0.90</div>
<div class="t" style="left:687px;top:525px;width:66px;height:25px;line-height:25px;color:#222;">2.09</div>
<div class="t" style="left:754px;top:525px;width:66px;height:25px;line-height:25px;color:#222;">3.67</div>
<div class="t" style="left:821px;top:525px;width:68px;height:25px;line-height:25px;color:#222;">3.13</div>
<div class="t" style="left:890px;top:525px;width:38px;height:25px;line-height:25px;color:#107c10;">平</div>
<div class="t" style="left:929px;top:525px;width:38px;height:25px;line-height:25px;color:#d82424;">赢</div>
<div class="t" style="left:968px;top:525px;width:59px;height:25px;line-height:25px;color:#1818b0;">小</div>
<div style="left:1px;top:550px;width:1026px;height:25px;background:#ffffff;"></div>
<div style="left:1px;top:550px;width:80px;height:25px;background:#cc00cc;"></div>
<div style="left:499px;top:550px;width:187px;height:25px;background:#fdf9f6;"></div>
<div style="left:687px;top:550px;width:202px;height:25px;background:#eff7fa;"></div>
<div class="t" style="left:1px;top:551px;width:80px;height:25px;line-height:25px;color:#fff;">德乙</div>
<div class="t" style="left:82px;top:551px;width:77px;height:25px;line-height:25px;color:#222;">25-04-19</div>
<div class="t" style="left:160px;top:551px;width:94px;height:25px;line-height:25px;color:#107c10;">埃弗斯堡</div>
<div class="t" style="left:255px;top:551px;width:91px;height:25px;line-height:25px;color:#222;"><span style="color:#d82424">1-1</span><span style="color:#3a3a3a">(0-0)</span></div>
<div class="t" style="left:347px;top:551px;width:37px;height:25px;line-height:25px;color:#222;">7-0</div>
<div class="t" style="left:385px;top:551px;width:113px;height:25px;line-height:25px;color:#222;">杜塞尔多夫</div>
<div class="t" style="left:499px;top:551px;width:48px;height:25px;line-height:25px;color:#222;">0.89</div>
<div class="t" style="left:548px;top:551px;width:85px;height:25px;line-height:25px;color:#222;">半球</div>
<div class="t" style="left:634px;top:551px;width:52px;height:25px;line-height:25px;color:#222;">1.00</div>
<div class="t" style="left:687px;top:551px;width:66px;height:25px;line-height:25px;color:#222;">1.85</div>
<div class="t" style="left:754px;top:551px;width:66px;height:25px;line-height:25px;color:#222;">3.81</div>
<div class="t" style="left:821px;top:551px;width:68px;height:25px;line-height:25px;color:#222;">3.72</div>
<div class="t" style="left:890px;top:551px;width:38px;height:25px;line-height:25px;color:#107c10;">平</div>
<div class="t" style="left:929px;top:551px;width:38px;height:25px;line-height:25px;color:#1818b0;">输</div>
<div class="t" style="left:968px;top:551px;width:59px;height:25px;line-height:25px;color:#1818b0;">小</div>
<div style="left:1px;top:576px;width:1026px;height:25px;background:#efefef;"></div>
<div style="left:1px;top:576px;width:80px;height:25px;background:#cc00cc;"></div>
<div style="left:499px;top:576px;width:187px;height:25px;background:#fdf9f6;"></div>
<div style="left:687px;top:576px;width:202px;height:25px;background:#eff7fa;"></div>
<div class="t" style="left:1px;top:577px;width:80px;height:25px;line-height:25px;color:#fff;">德乙</div>
<div class="t" style="left:82px;top:577px;width:77px;height:25px;line-height:25px;color:#222;">25-04-12</div>
<div class="t" style="left:160px;top:577px;width:94px;height:25px;line-height:25px;color:#222;">汉诺威96</div>
<div class="t" style="left:255px;top:577px;width:91px;height:25px;line-height:25px;color:#222;"><span style="color:#d82424">1-3</span><span style="color:#3a3a3a">(1-0)</span></div>
<div class="t" style="left:347px;top:577px;width:37px;height:25px;line-height:25px;color:#222;">5-5</div>
<div class="t" style="left:385px;top:577px;width:113px;height:25px;line-height:25px;color:#107c10;">埃弗斯堡</div>
<div class="t" style="left:499px;top:577px;width:48px;height:25px;line-height:25px;color:#222;">0.79</div>
<div class="t" style="left:548px;top:577px;width:85px;height:25px;line-height:25px;color:#222;">平手</div>
<div class="t" style="left:634px;top:577px;width:52px;height:25px;line-height:25px;color:#222;">1.11</div>
<div class="t" style="left:687px;top:577px;width:66px;height:25px;line-height:25px;color:#222;">2.40</div>
<div class="t" style="left:754px;top:577px;width:66px;height:25px;line-height:25px;color:#222;">3.48</div>
<div class="t" style="left:821px;top:577px;width:68px;height:25px;line-height:25px;color:#222;">2.72</div>
<div class="t" style="left:890px;top:577px;width:38px;height:25px;line-height:25px;color:#d82424;">胜</div>
<div class="t" style="left:929px;top:577px;width:38px;height:25px;line-height:25px;color:#d82424;">赢</div>
<div class="t" style="left:968px;top:577px;width:59px;height:25px;line-height:25px;color:#dd3311;">大</div>
<div style="left:1px;top:602px;width:1026px;height:25px;background:#ffffff;"></div>
<div style="left:1px;top:602px;width:80px;height:25px;background:#cc00cc;"></div>
<div style="left:499px;top:602px;width:187px;height:25px;background:#fdf9f6;"></div>
<div style="left:687px;top:602px;width:202px;height:25px;background:#eff7fa;"></div>
<div class="t" style="left:1px;top:603px;width:80px;height:25px;line-height:25px;color:#fff;">德乙</div>
<div class="t" style="left:82px;top:603px;width:77px;height:25px;line-height:25px;color:#222;">25-04-06</div>
<div class="t" style="left:160px;top:603px;width:94px;height:25px;line-height:25px;color:#107c10;">埃弗斯堡</div>
<div class="t" style="left:255px;top:603px;width:91px;height:25px;line-height:25px;color:#222;"><span style="color:#d82424">6-0</span><span style="color:#3a3a3a">(3-0)</span></div>
<div class="t" style="left:347px;top:603px;width:37px;height:25px;line-height:25px;color:#222;">0-4</div>
<div class="t" style="left:385px;top:603px;width:113px;height:25px;line-height:25px;color:#222;">雷根斯堡</div>
<div class="t" style="left:499px;top:603px;width:48px;height:25px;line-height:25px;color:#222;">0.83</div>
<div class="t" style="left:548px;top:603px;width:85px;height:25px;line-height:25px;color:#222;">一/球半</div>
<div class="t" style="left:634px;top:603px;width:52px;height:25px;line-height:25px;color:#222;">1.06</div>
<div class="t" style="left:687px;top:603px;width:66px;height:25px;line-height:25px;color:#222;">1.37</div>
<div class="t" style="left:754px;top:603px;width:66px;height:25px;line-height:25px;color:#222;">4.79</div>
<div class="t" style="left:821px;top:603px;width:68px;height:25px;line-height:25px;color:#222;">7.51</div>
<div class="t" style="left:890px;top:603px;width:38px;height:25px;line-height:25px;color:#d82424;">胜</div>
<div class="t" style="left:929px;top:603px;width:38px;height:25px;line-height:25px;color:#d82424;">赢</div>
<div class="t" style="left:968px;top:603px;width:59px;height:25px;line-height:25px;color:#dd3311;">大</div>
<div style="left:1px;top:628px;width:1026px;height:25px;background:#efefef;"></div>
<div style="left:1px;top:628px;width:80px;height:25px;background:#cc00cc;"></div>
<div style="left:499px;top:628px;width:187px;height:25px;background:#fdf9f6;"></div>
<div style="left:687px;top:628px;width:202px;height:25px;background:#eff7fa;"></div>
<div class="t" style="left:1px;top:629px;width:80px;height:25px;line-height:25px;color:#fff;">德乙</div>
<div class="t" style="left:82px;top:629px;width:77px;height:25px;line-height:25px;color:#222;">25-03-29</div>
<div class="t" style="left:160px;top:629px;width:94px;height:25px;line-height:25px;color:#222;">汉堡</div>
<div class="t" style="left:255px;top:629px;width:91px;height:25px;line-height:25px;color:#222;"><span style="color:#d82424">0-0</span><span style="color:#3a3a3a">(0-0)</span></div>
<div class="t" style="left:347px;top:629px;width:37px;height:25px;line-height:25px;color:#222;">8-4</div>
<div class="t" style="left:385px;top:629px;width:113px;height:25px;line-height:25px;color:#107c10;">埃弗斯堡</div>
<div class="t" style="left:499px;top:629px;width:48px;height:25px;line-height:25px;color:#222;">0.87</div>
<div class="t" style="left:548px;top:629px;width:85px;height:25px;line-height:25px;color:#222;">半球</div>
<div class="t" style="left:634px;top:629px;width:52px;height:25px;line-height:25px;color:#222;">1.02</div>
<div class="t" style="left:687px;top:629px;width:66px;height:25px;line-height:25px;color:#222;">1.77</div>
<div class="t" style="left:754px;top:629px;width:66px;height:25px;line-height:25px;color:#222;">3.91</div>
<div class="t" style="left:821px;top:629px;width:68px;height:25px;line-height:25px;color:#222;">4.03</div>
<div class="t" style="left:890px;top:629px;width:38px;height:25px;line-height:25px;color:#107c10;">平</div>
<div class="t" style="left:929px;top:629px;width:38px;height:25px;line-height:25px;color:#d82424;">赢</div>
<div class="t" style="left:968px;top:629px;width:59px;height:25px;line-height:25px;color:#1818b0;">小</div>
<div style="left:1px;top:654px;width:1026px;height:25px;background:#ffffff;"></div>
<div style="left:1px;top:654px;width:80px;height:25px;background:#cc00cc;"></div>
<div style="left:499px;top:654px;width:187px;height:25px;background:#fdf9f6;"></div>
<div style="left:687px;top:654px;width:202px;height:25px;background:#eff7fa;"></div>
<div class="t" style="left:1px;top:655px;width:80px;height:25px;line-height:25px;color:#fff;">德乙</div>
<div class="t" style="left:82px;top:655px;width:77px;height:25px;line-height:25px;color:#222;">25-03-15</div>
<div class="t" style="left:160px;top:655px;width:94px;height:25px;line-height:25px;color:#107c10;">埃弗斯堡</div>
<div class="t" style="left:255px;top:655px;width:91px;height:25px;line-height:25px;color:#222;"><span style="color:#d82424">0-1</span><span style="color:#3a3a3a">(0-0)</span></div>
<div class="t" style="left:347px;top:655px;width:37px;height:25px;line-height:25px;color:#222;">4-2</div>
<div class="t" style="left:385px;top:655px;width:113px;height:25px;line-height:25px;color:#222;">普鲁士明斯特</div>
<div class="t" style="left:499px;top:655px;width:48px;height:25px;line-height:25px;color:#222;">1.06</div>
<div class="t" style="left:548px;top:655px;width:85px;height:25px;line-height:25px;color:#222;">一球</div>
<div class="t" style="left:634px;top:655px;width:52px;height:25px;line-height:25px;color:#222;">0.83</div>
<div class="t" style="left:687px;top:655px;width:66px;height:25px;line-height:25px;color:#222;">1.63</div>
<div class="t" style="left:754px;top:655px;width:66px;height:25px;line-height:25px;color:#222;">3.99</div>
<div class="t" style="left:821px;top:655px;width:68px;height:25px;line-height:25px;color:#222;">4.82</div>
<div class="t" style="left:890px;top:655px;width:38px;height:25px;line-height:25px;color:#1818b0;">负</div>
<div class="t" style="left:929px;top:655px;width:38px;height:25px;line-height:25px;color:#1818b0;">输</div>
<div class="t" style="left:968px;top:655px;width:59px;height:25px;line-height:25px;color:#1818b0;">小</div>
<div style="left:1px;top:680px;width:1026px;height:25px;background:#efefef;"></div>
<div style="left:1px;top:680px;width:80px;height:25px;background:#cc00cc;"></div>
<div style="left:499px;top:680px;width:187px;height:25px;background:#fdf9f6;"></div>
<div style="left:687px;top:680px;width:202px;height:25px;background:#eff7fa;"></div>
<div class="t" style="left:1px;top:681px;width:80px;height:25px;line-height:25px;color:#fff;">德乙</div>
<div class="t" style="left:82px;top:681px;width:77px;height:25px;line-height:25px;color:#222;">25-03-08</div>
<div class="t" style="left:160px;top:681px;width:94px;height:25px;line-height:25px;color:#222;">凯泽斯劳滕</div>
<div class="t" style="left:255px;top:681px;width:91px;height:25px;line-height:25px;color:#222;"><span style="color:#d82424">1-1</span><span style="color:#3a3a3a">(1-0)</span></div>
<div class="t" style="left:347px;top:681px;width:37px;height:25px;line-height:25px;color:#222;">7-3</div>
<div class="t" style="left:385px;top:681px;width:113px;height:25px;line-height:25px;color:#107c10;">埃弗斯堡</div>
<div class="t" style="left:499px;top:681px;width:48px;height:25px;line-height:25px;color:#222;">0.89</div>
<div class="t" style="left:548px;top:681px;width:85px;height:25px;line-height:25px;color:#222;">受平/半</div>
<div class="t" style="left:634px;top:681px;width:52px;height:25px;line-height:25px;color:#222;">1.00</div>
<div class="t" style="left:687px;top:681px;width:66px;height:25px;line-height:25px;color:#222;">2.67</div>
<div class="t" style="left:754px;top:681px;width:66px;height:25px;line-height:25px;color:#222;">3.54</div>
<div class="t" style="left:821px;top:681px;width:68px;height:25px;line-height:25px;color:#222;">2.41</div>
<div class="t" style="left:890px;top:681px;width:38px;height:25px;line-height:25px;color:#107c10;">平</div>
<div class="t" style="left:929px;top:681px;width:38px;height:25px;line-height:25px;color:#1818b0;">输</div>
<div class="t" style="left:968px;top:681px;width:59px;height:25px;line-height:25px;color:#1818b0;">小</div>
<div style="left:1px;top:706px;width:1026px;height:25px;background:#fff;"></div>
<div class="t" style="left:1px;top:707px;width:1026px;height:25px;line-height:25px;color:#222;letter-spacing:0.2px;">近<span style="color:#d82424">10</span>场,胜5平4负1, 胜率:<span style="color:#d82424">50%</span> 让胜率:<span style="color:#d82424">60%</span> 大率:<span style="color:#d82424">30%</span> 单率:<span style="color:#d82424">30%</span></div>
<div style="left:0px;top:406px;width:1028px;height:1px;background:#c3c3c3"></div>
<div style="left:498px;top:426px;width:530px;height:1px;background:#c3c3c3"></div>
<div style="left:0px;top:445px;width:1028px;height:1px;background:#c3c3c3"></div>
<div style="left:82px;top:471px;width:946px;height:1px;background:#c3c3c3"></div>
<div style="left:82px;top:497px;width:946px;height:1px;background:#c3c3c3"></div>
<div style="left:82px;top:523px;width:946px;height:1px;background:#c3c3c3"></div>
<div style="left:82px;top:549px;width:946px;height:1px;background:#c3c3c3"></div>
<div style="left:82px;top:575px;width:946px;height:1px;background:#c3c3c3"></div>
<div style="left:82px;top:601px;width:946px;height:1px;background:#c3c3c3"></div>
<div style="left:82px;top:627px;width:946px;height:1px;background:#c3c3c3"></div>
<div style="left:82px;top:653px;width:946px;height:1px;background:#c3c3c3"></div>
<div style="left:82px;top:679px;width:946px;height:1px;background:#c3c3c3"></div>
<div style="left:82px;top:705px;width:946px;height:1px;background:#c3c3c3"></div>
<div style="left:0px;top:731px;width:1028px;height:1px;background:#c3c3c3"></div>
<div style="left:0px;top:406px;width:1px;height:39px;background:#c3c3c3"></div>
<div style="left:81px;top:406px;width:1px;height:39px;background:#c3c3c3"></div>
<div style="left:159px;top:406px;width:1px;height:39px;background:#c3c3c3"></div>
<div style="left:254px;top:406px;width:1px;height:39px;background:#c3c3c3"></div>
<div style="left:346px;top:406px;width:1px;height:39px;background:#c3c3c3"></div>
<div style="left:384px;top:406px;width:1px;height:39px;background:#c3c3c3"></div>
<div style="left:498px;top:406px;width:1px;height:39px;background:#c3c3c3"></div>
<div style="left:686px;top:406px;width:1px;height:39px;background:#c3c3c3"></div>
<div style="left:889px;top:406px;width:1px;height:39px;background:#c3c3c3"></div>
<div style="left:1027px;top:406px;width:1px;height:39px;background:#c3c3c3"></div>
<div style="left:547px;top:426px;width:1px;height:19px;background:#c3c3c3"></div>
<div style="left:633px;top:426px;width:1px;height:19px;background:#c3c3c3"></div>
<div style="left:753px;top:426px;width:1px;height:19px;background:#c3c3c3"></div>
<div style="left:820px;top:426px;width:1px;height:19px;background:#c3c3c3"></div>
<div style="left:928px;top:426px;width:1px;height:19px;background:#c3c3c3"></div>
<div style="left:967px;top:426px;width:1px;height:19px;background:#c3c3c3"></div>
<div style="left:159px;top:445px;width:1px;height:261px;background:#c3c3c3"></div>
<div style="left:254px;top:445px;width:1px;height:261px;background:#c3c3c3"></div>
<div style="left:346px;top:445px;width:1px;height:261px;background:#c3c3c3"></div>
<div style="left:384px;top:445px;width:1px;height:261px;background:#c3c3c3"></div>
<div style="left:498px;top:445px;width:1px;height:261px;background:#c3c3c3"></div>
<div style="left:547px;top:445px;width:1px;height:261px;background:#c3c3c3"></div>
<div style="left:633px;top:445px;width:1px;height:261px;background:#c3c3c3"></div>
<div style="left:686px;top:445px;width:1px;height:261px;background:#c3c3c3"></div>
<div style="left:753px;top:445px;width:1px;height:261px;background:#c3c3c3"></div>
<div style="left:820px;top:445px;width:1px;height:261px;background:#c3c3c3"></div>
<div style="left:889px;top:445px;width:1px;height:261px;background:#c3c3c3"></div>
<div style="left:928px;top:445px;width:1px;height:261px;background:#c3c3c3"></div>
<div style="left:967px;top:445px;width:1px;height:261px;background:#c3c3c3"></div>
<div style="left:1027px;top:445px;width:1px;height:287px;background:#c3c3c3"></div>
<div style="left:0px;top:705px;width:1px;height:27px;background:#c3c3c3"></div>
<div style="left:0px;top:471px;width:82px;height:1px;background:#f09ef0"></div>
<div style="left:0px;top:497px;width:82px;height:1px;background:#f09ef0"></div>
<div style="left:0px;top:523px;width:82px;height:1px;background:#f09ef0"></div>
<div style="left:0px;top:549px;width:82px;height:1px;background:#f09ef0"></div>
<div style="left:0px;top:575px;width:82px;height:1px;background:#f09ef0"></div>
<div style="left:0px;top:601px;width:82px;height:1px;background:#f09ef0"></div>
<div style="left:0px;top:627px;width:82px;height:1px;background:#f09ef0"></div>
<div style="left:0px;top:653px;width:82px;height:1px;background:#f09ef0"></div>
<div style="left:0px;top:679px;width:82px;height:1px;background:#f09ef0"></div>
<div style="left:0px;top:705px;width:82px;height:1px;background:#f09ef0"></div>
<div style="left:0px;top:445px;width:82px;height:1px;background:#e6b4e6"></div>
<div style="left:0px;top:445px;width:1px;height:260px;background:#f0b0f0"></div>
<div style="left:81px;top:446px;width:1px;height:259px;background:#f6d6f6"></div>
</body></html>
